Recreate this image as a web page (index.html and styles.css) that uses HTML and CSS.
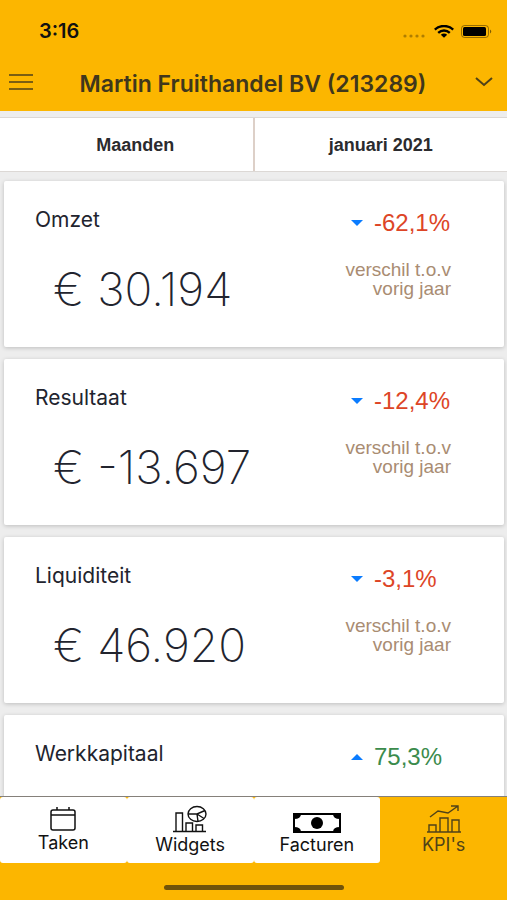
FILE: index.html
```html
<!DOCTYPE html>
<html lang="nl">
  <head>
    <meta charset="UTF-8" />
    <meta name="viewport" content="width=device-width, initial-scale=1.0" />
    <title>KPI's</title>
    <link rel="stylesheet" href="styles.css">
  </head>
  <body>
    <header class="header">
      <div class="status-bar">
        <span class="time">3:16</span>
        <div class="status-icons">
          <svg width="24" height="6" viewBox="0 0 24 6" fill="#000" opacity="0.3">
            <circle cx="2" cy="4" r="1.6" /><circle cx="8" cy="4" r="1.6" />
            <circle cx="14" cy="4" r="1.6" /><circle cx="20" cy="4" r="1.6" />
          </svg>
          <svg width="20" height="13" viewBox="0 0 20 13" fill="none" stroke="#000" stroke-width="2.4">
            <path d="M0.8 4.6C6 -0.2 14 -0.2 19.2 4.6" />
            <path d="M4.2 7.8C7.6 4.8 12.4 4.8 15.8 7.8" />
            <path d="M6.8 9.8Q10 7.4 13.2 9.8L10 12.8Z" fill="#000" stroke="none" />
          </svg>
          <svg width="32" height="13" viewBox="0 0 32 13">
            <rect x="0.5" y="0.5" width="27" height="12" rx="3" fill="none" stroke="#000" stroke-opacity="0.4" />
            <rect x="2" y="2" width="23" height="9" rx="1.5" fill="#000" />
            <path d="M29 4.5Q31.5 6.5 29 8.5Z" fill="#000" opacity="0.5" />
          </svg>
        </div>
      </div>
      <div class="title-bar">
        <button class="menu-button" aria-label="Menu">
          <svg width="24" height="18" viewBox="0 0 24 18" stroke="#4f4218" stroke-width="1.6">
            <path d="M0 2H24M0 9H24M0 16H24" />
          </svg>
        </button>
        <button class="company-button">
          <span class="company">Martin Fruithandel BV (213289)</span>
          <svg width="18" height="14" viewBox="0 0 18 14" fill="none" stroke="#4f4218" stroke-width="2">
            <path d="M1 1L9 8L17 1" />
          </svg>
        </button>
      </div>
    </header>

    <div class="filters">
      <select class="filter filter-period" aria-label="Periode">
        <option>Maanden</option>
      </select>
      <select class="filter" aria-label="Maand">
        <option>januari 2021</option>
      </select>
    </div>

    <main class="cards">
      <section class="card">
        <div class="card-main">
          <h2 class="card-title">Omzet</h2>
          <p class="amount">€ 30.194</p>
        </div>
        <div class="card-side">
          <p class="change down"><span class="arrow"></span>-62,1%</p>
          <p class="note">verschil t.o.v<br />vorig jaar</p>
        </div>
      </section>
      <section class="card">
        <div class="card-main">
          <h2 class="card-title">Resultaat</h2>
          <p class="amount">€ -13.697</p>
        </div>
        <div class="card-side">
          <p class="change down"><span class="arrow"></span>-12,4%</p>
          <p class="note">verschil t.o.v<br />vorig jaar</p>
        </div>
      </section>
      <section class="card">
        <div class="card-main">
          <h2 class="card-title">Liquiditeit</h2>
          <p class="amount">€ 46.920</p>
        </div>
        <div class="card-side">
          <p class="change down"><span class="arrow"></span>-3,1%</p>
          <p class="note">verschil t.o.v<br />vorig jaar</p>
        </div>
      </section>
      <section class="card">
        <div class="card-main">
          <h2 class="card-title">Werkkapitaal</h2>
        </div>
        <div class="card-side">
          <p class="change up"><span class="arrow"></span>75,3%</p>
        </div>
      </section>
    </main>

    <footer class="footer">
      <nav class="tabs">
        <a class="tab tab-taken" href="#taken">
          <svg width="26" height="24" viewBox="0 0 26 24" fill="none" stroke="#111" stroke-width="1.5">
            <rect x="1" y="3" width="24" height="20" rx="2" />
            <path d="M1 8H25M7 0V3M19 0V3" />
          </svg>
          Taken
        </a>
        <a class="tab" href="#widgets">
          <svg width="34" height="28" viewBox="0 0 34 28" fill="none" stroke="#111" stroke-width="1.4">
            <path d="M0 26.500H33M3 26V8H9.500V26M13 26V18H19.500V26M23 26V20H29.500V26" />
            <ellipse cx="24" cy="9" rx="9" ry="7.500" />
            <path d="M15 9H24L32 5.500M24 9L25 16.500M24 9L31 13.500" />
          </svg>
          Widgets
        </a>
        <a class="tab" href="#facturen">
          <svg width="48" height="20" viewBox="0 0 48 20">
            <rect x="1" y="1" width="46" height="18" fill="#fff" stroke="#000" stroke-width="2" />
            <path d="M1 1H8Q8 6 1 6ZM47 1H40Q40 6 47 6ZM1 19H8Q8 14 1 14ZM47 19H40Q40 14 47 14Z" />
            <circle cx="24" cy="10" r="6" />
          </svg>
          Facturen
        </a>
        <a class="tab active" href="#kpis">
          <svg width="34" height="28" viewBox="0 0 34 28" fill="none" stroke="#4f4218" stroke-width="1.4">
            <path d="M0 27H34M2 27V20H9V27M13 27V13H21V27M25 27V15H32V27" />
            <path d="M3 12L11 6L21 8L31 1M24 1H31V6" />
          </svg>
          KPI's
        </a>
      </nav>
      <div class="home-bar"></div>
    </footer>
  </body>
</html>
```
FILE: styles.css
```css
* {
  box-sizing: border-box;
}
body {
  margin: 0;
  height: 100vh;
  display: flex;
  flex-direction: column;
  overflow: hidden;
  background: #ededed;
  color: #22242e;
  font-family: "Inter", sans-serif;
}
h2,
p {
  margin: 0;
  font-weight: 400;
}
button {
  border: none;
  padding: 0;
  background: none;
  font: inherit;
  color: inherit;
  cursor: pointer;
}
svg {
  display: block;
  flex-shrink: 0;
}
.header {
  flex-shrink: 0;
  background: #fcb600;
}
.status-bar {
  display: flex;
  justify-content: space-between;
  align-items: center;
  height: 62px;
  padding: 0 14px 0 39px;
}
.time {
  color: #111;
  font-size: 20px;
  font-weight: 600;
}
.status-icons {
  display: flex;
  align-items: center;
  gap: 7px;
}
.status-icons svg:first-child {
  align-self: flex-end;
}
.title-bar {
  display: flex;
  align-items: center;
  height: 49px;
  padding: 0 14px 6px 9px;
}
.menu-button {
  padding-bottom: 4px;
}
.company-button {
  flex: 1;
  display: flex;
  align-items: center;
}
.company {
  flex: 1;
  padding-right: 2px;
  color: #40371c;
  font-size: 23px;
  font-weight: 600;
}
.filters {
  flex-shrink: 0;
  display: grid;
  grid-template-columns: 1fr 1fr;
  gap: 2px;
  margin-top: 6px;
  border: solid #dcd8d5;
  border-width: 1px 0;
  background: #ddd0c8;
}
.filter {
  min-width: 0;
  height: 53px;
  border: none;
  border-radius: 0;
  appearance: none;
  background: #fff;
  color: #2b2b2e;
  font: bold 18px "Liberation Sans", sans-serif;
  text-align: center;
  text-align-last: center;
}
.filter-period {
  padding-left: 18px;
}
.cards {
  flex: 1;
  min-height: 0;
  overflow: hidden;
  padding: 9px 3px 0 4px;
}
.card {
  display: flex;
  justify-content: space-between;
  min-height: 166px;
  margin-bottom: 12px;
  padding: 26px 53px 0 31px;
  border-radius: 2px;
  background: #fff;
  box-shadow: 0 1px 4px rgba(0, 0, 0, 0.2);
}
.card-title {
  font-size: 21px;
  line-height: 26px;
}
.amount {
  margin-top: 30px;
  padding-left: 18px;
  font-size: 46px;
  font-weight: 200;
  line-height: 52px;
}
.card-side {
  width: 114px;
  font-family: "Liberation Sans", sans-serif;
}
.change {
  display: flex;
  align-items: center;
  gap: 11px;
  padding-left: 14px;
  font-size: 24px;
  line-height: 32px;
}
.down {
  color: #dd4526;
}
.up {
  color: #3b8b4c;
}
.arrow {
  border: 6px solid transparent;
  border-bottom-width: 0;
  border-top: 6px solid #0a7cff;
}
.up .arrow {
  border-top: none;
  border-bottom: 6px solid #0a7cff;
}
.note {
  margin-top: 21px;
  color: #a98c72;
  font-size: 19px;
  line-height: 19px;
  text-align: right;
}
.footer {
  flex-shrink: 0;
  border-top: 1px solid #85807a;
  background: #fcb600;
}
.tabs {
  display: flex;
  height: 66px;
}
.tab {
  flex: 1;
  display: flex;
  flex-direction: column;
  align-items: center;
  justify-content: flex-end;
  gap: 1px;
  padding-bottom: 7px;
  border-radius: 3px;
  background: #fff;
  color: #111;
  font-size: 18px;
  line-height: 22px;
  text-decoration: none;
}
.tab-taken {
  padding-bottom: 9px;
}
.tab.active {
  background: #fcb600;
  color: #4f4218;
}
.home-bar {
  width: 180px;
  height: 5px;
  margin: 22px auto 10px;
  border-radius: 3px;
  background: #71530a;
}
```
